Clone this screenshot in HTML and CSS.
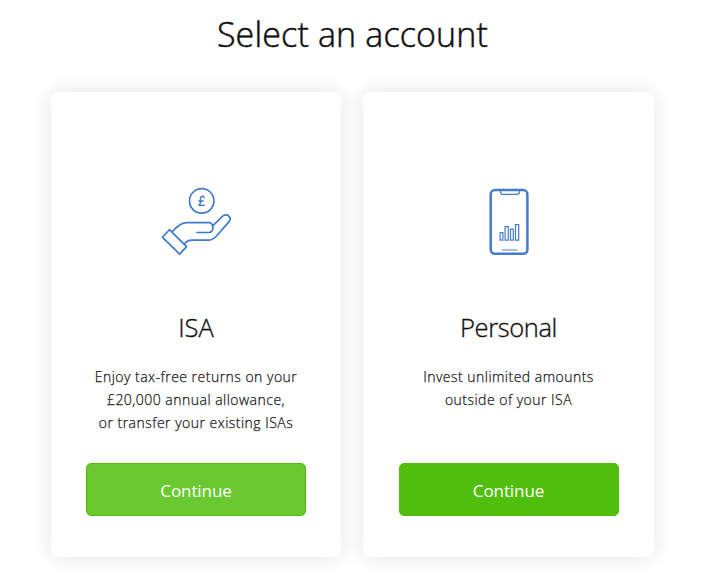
FILE: index.html
```html
<!DOCTYPE html>
<html lang="en">
<head>
<meta charset="utf-8">
<title>Select an account</title>
<link rel="stylesheet" href="styles.css">
</head>
<body>
<main class="page">
  <h1 class="heading">Select an account</h1>
  <div class="cards">
    <section class="card">
      <svg class="icon" viewBox="1 0 90 85" fill="none" stroke="#3f7acb" stroke-width="1.7" stroke-linejoin="round" stroke-linecap="round">
        <circle cx="51.7" cy="20.9" r="12.2"/>
        <path stroke-width="1.4" d="M54.2 17.6C53.7 15.6 50.5 15.7 50.4 18.5C50.4 20.7 51.5 23.2 48.9 25.4H54.3M48.9 21H53.1"/>
        <path d="M19.4 49.7L36.6 66.7L29.7 74.2L12.5 57.3Z"/>
        <path d="M22.5 51.2C26.5 47.5 30.2 42.6 36.5 42.6H59C64.3 42.6 64.3 52.5 58.8 52.5H47M62.5 46.2L72.2 36.5C76.5 32.5 82.2 36.8 79.3 41.4L66.5 56C63.3 59.2 61.6 60.2 58.5 60.2H42C38.5 60.2 36.4 61.6 34.5 64"/>
      </svg>
      <h2 class="title">ISA</h2>
      <p class="text">Enjoy tax-free returns on your<br>£20,000 annual allowance,<br>or transfer your existing ISAs</p>
      <button class="button button-hover">Continue</button>
    </section>
    <section class="card card-wide">
      <svg class="icon" viewBox="-1.5 0 90 85" fill="none" stroke="#437ccd">
        <rect x="25.2" y="10.1" width="36.7" height="63.7" rx="4.2" stroke-width="2.5"/>
        <path stroke-width="1.2" d="M35 10.5V12C35 13.7 36 14.4 37.5 14.4H51C53 14.4 54 13.7 54 12V10.5"/>
        <path stroke-width="1.2" d="M34.6 52.6H37.4V60.2H34.6ZM39.6 46.6H42.8V60.2H39.6ZM45 49.2H47.8V60.2H45ZM50 44.6H53.2V60.2H50Z"/>
        <path stroke="#9bb9e5" stroke-width="1.8" d="M36.2 70H52"/>
      </svg>
      <h2 class="title title-long">Personal</h2>
      <p class="text">Invest unlimited amounts<br>outside of your ISA</p>
      <button class="button">Continue</button>
    </section>
  </div>
</main>
</body>
</html>
```
FILE: styles.css
```css
* { box-sizing: border-box; }
body {
  margin: 0;
  background: #fff;
  color: #111;
  font-family: "Open Sans", "Noto Sans", sans-serif;
  overflow: hidden;
}
.page { padding: 10px 59px 0 51px; height: 578px; }
.heading {
  margin: 0;
  height: 82px;
  font-size: 34px;
  line-height: 48px;
  font-weight: 300;
  -webkit-text-stroke: 0.5px #111;
  text-align: center;
  letter-spacing: 0.15px;
  white-space: nowrap;
}
.cards { display: flex; gap: 22px; }
.card {
  width: 290px;
  height: 465px;
  padding: 88px 0 41px;
  display: flex;
  flex-direction: column;
  align-items: center;
  background: #fff;
  border-radius: 6px;
  box-shadow: 0 0 20px rgba(0, 0, 0, 0.1);
}
.card-wide { width: 291px; }
.icon { width: 90px; height: 85px; flex: none; }
.title {
  margin: 43px 0 1px;
  font-size: 25.5px;
  line-height: 38px;
  font-weight: 300;
  -webkit-text-stroke: 0.35px #111;
}
.title-long { letter-spacing: -0.4px; }
.text {
  margin: 18px 0 0;
  font-size: 14px;
  line-height: 23px;
  text-align: center;
  white-space: nowrap;
  font-weight: 300;
  -webkit-text-stroke: 0.25px #222;
  letter-spacing: 0.48px;
}
.button {
  width: 220px;
  height: 53px;
  margin-top: auto;
  padding: 2px 0 0;
  border: 1px solid #50be0d;
  border-radius: 5px;
  background: #50be0d;
  color: #fff;
  font: 400 17px/49px "Open Sans", sans-serif;
  letter-spacing: -0.1px;
}
.button-hover { background: #6ac930; border-color: #50be0d; }
```
